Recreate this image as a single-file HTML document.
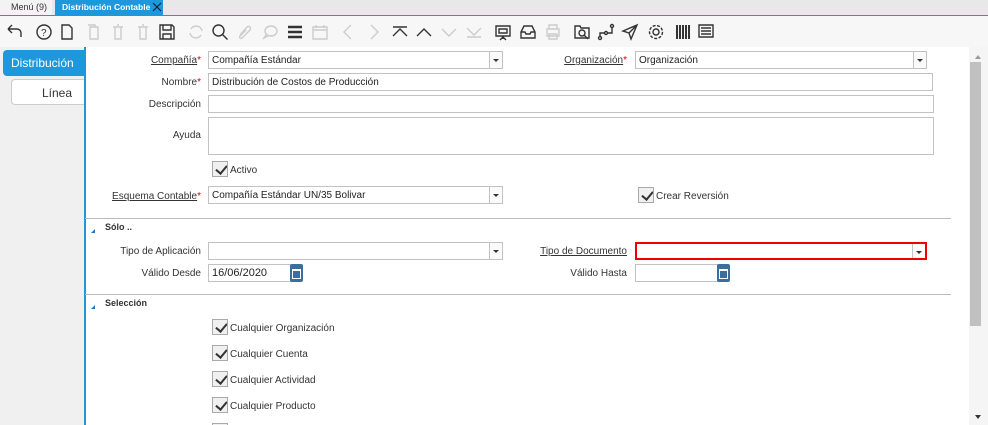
<!DOCTYPE html><html><head><meta charset="utf-8"><style>
*{margin:0;padding:0;box-sizing:border-box}
html,body{width:988px;height:425px;overflow:hidden}
body{background:#fff;font-family:"Liberation Sans",sans-serif;font-size:10px;color:#333;position:relative}
.a{position:absolute}
.lbl{position:absolute;text-align:right;width:180px;font-size:10px;color:#333}
.u{text-decoration:underline}
.req{color:#d00}
.in{position:absolute;border:1px solid #c2c2c2;background:#fff;height:18px;font-size:10px;padding:3px 0 0 3px;color:#222}
.dd{position:absolute;right:0;top:0;width:13px;height:16px;border-left:1px solid #c2c2c2;background:#fafafa}
.dd:after{content:"";position:absolute;left:3px;top:7px;border:3px solid transparent;border-top:3px solid #333}
.cal{position:absolute;width:13px;height:18px;background:#3a6e9e;border-radius:2px}
.cal:after{content:"";position:absolute;left:2px;top:5px;width:7px;height:7px;border:1px solid #fff;border-top-width:2px}
.cb{position:absolute;width:16px;height:16px;border:1px solid #aaa;background:#f0f0f0;overflow:hidden}
.cb:after{content:"";position:absolute;left:5px;top:1px;width:5px;height:9px;border:solid #333;border-width:0 2px 2px 0;transform:rotate(40deg)}
.cbl{position:absolute;font-size:10px;color:#333}
.sep{position:absolute;left:85px;width:866px;height:1px;background:#bbb}
.sec{position:absolute;left:105px;font-weight:bold;font-size:9px;color:#333}
.tri{position:absolute;left:91px;width:0;height:0;border-left:4px solid transparent;border-bottom:4px solid #1e78c8}
svg.i{position:absolute;top:23px;width:18px;height:18px;fill:none;stroke:#333;stroke-width:1.4}
svg.g{stroke:#ccc}
</style></head><body>
<div class="a" style="left:0;top:0;width:988px;height:15px;background:#e8e8e8"></div>
<div class="a" style="left:0;top:0;width:52px;height:15px;background:#f3f3f3;font-size:9px;padding:2px 0 0 11px;color:#333">Menú (9)</div>
<div class="a" style="left:55px;top:0;width:108px;height:15px;background:#1e98dc;font-size:8.5px;padding:2px 0 0 7px;color:#fff;font-weight:bold;white-space:nowrap">Distribución Contable</div>
<svg class="a" style="left:152px;top:2px" width="10" height="10" viewBox="0 0 10 10"><path d="M1 1l8 8M9 1l-8 8" stroke="#123" stroke-width="1.2"/></svg>
<div class="a" style="left:0;top:15px;width:988px;height:1px;background:#1e98dc"></div>
<div class="a" style="left:0;top:16px;width:988px;height:31px;background:#f7f7f7"></div>
<svg class="i" style="left:5px" viewBox="0 0 18 18"><path d="M3 6h9a4 4 0 0 1 4 4v4M3 6l4-4M3 6l4 4"/></svg>
<svg class="i" style="left:35px" viewBox="0 0 18 18"><circle cx="9" cy="9" r="7"/><text x="6" y="13" font-size="10" fill="#333" stroke="none">?</text></svg>
<svg class="i" style="left:58px" viewBox="0 0 18 18"><path d="M4 2h7l3 3v11H4z"/></svg>
<svg class="i g" style="left:84px" viewBox="0 0 18 18"><path d="M6 4h8v12H6zM4 2h7v2"/></svg>
<svg class="i g" style="left:109px" viewBox="0 0 18 18"><path d="M4 4h10M6 4v12h6V4M8 2h2"/></svg>
<svg class="i g" style="left:134px" viewBox="0 0 18 18"><path d="M4 4h10M6 4v12h6V4M8 2h2"/></svg>
<svg class="i" style="left:158px" viewBox="0 0 18 18"><path d="M2 2h12l2 2v12H2zM5 2v5h8V2M5 16v-5h8v5"/></svg>
<svg class="i g" style="left:187px" viewBox="0 0 18 18"><path d="M15 8a6 6 0 0 0-11-2M3 10a6 6 0 0 0 11 2"/></svg>
<svg class="i" style="left:211px" viewBox="0 0 18 18"><circle cx="7.5" cy="7.5" r="5.5"/><path d="M11.5 11.5l5 5"/></svg>
<svg class="i g" style="left:236px" viewBox="0 0 18 18"><path d="M4 12l7-8a2 2 0 0 1 3 3l-8 8a1 1 0 0 1-2-2l6-6"/></svg>
<svg class="i g" style="left:261px" viewBox="0 0 18 18"><ellipse cx="10" cy="8" rx="6" ry="5"/><path d="M5 12l-2 3 4-2"/></svg>
<svg class="i" style="left:286px;stroke-width:2.5" viewBox="0 0 18 18"><path d="M2 4h14M2 9h14M2 14h14"/></svg>
<svg class="i g" style="left:311px" viewBox="0 0 18 18"><path d="M2 4h14v12H2zM2 7h14M5 2v3M13 2v3"/></svg>
<svg class="i g" style="left:339px" viewBox="0 0 18 18"><path d="M12 2L5 9l7 7"/></svg>
<svg class="i g" style="left:365px" viewBox="0 0 18 18"><path d="M6 2l7 7-7 7"/></svg>
<svg class="i" style="left:391px" viewBox="0 0 18 18"><path d="M2 4h14M2 13l7-7 7 7"/></svg>
<svg class="i" style="left:415px" viewBox="0 0 18 18"><path d="M2 13l7-7 7 7"/></svg>
<svg class="i g" style="left:440px" viewBox="0 0 18 18"><path d="M2 6l7 7 7-7"/></svg>
<svg class="i g" style="left:465px" viewBox="0 0 18 18"><path d="M2 14h14M2 5l7 7 7-7"/></svg>
<svg class="i" style="left:494px" viewBox="0 0 18 18"><path d="M2 3h14v10H2zM9 13v3M6 17l3-3 3 3M5 6h8v4H5z"/></svg>
<svg class="i" style="left:519px" viewBox="0 0 18 18"><path d="M2 9l3-6h8l3 6v6H2zM2 9h4l1 2h4l1-2h4"/></svg>
<svg class="i g" style="left:544px" viewBox="0 0 18 18"><path d="M5 6V2h8v4M3 6h12v7H3zM5 11h8v5H5z"/></svg>
<svg class="i" style="left:573px" viewBox="0 0 18 18"><path d="M2 3h5l1 2h8v10H2z"/><circle cx="9" cy="10" r="3"/><path d="M11 12l4 4"/></svg>
<svg class="i" style="left:597px" viewBox="0 0 18 18"><circle cx="3" cy="15" r="1.5"/><circle cx="9" cy="10" r="1.5"/><circle cx="15" cy="3" r="1.5"/><path d="M3 13V10h5M10 10h5V5"/></svg>
<svg class="i" style="left:621px" viewBox="0 0 18 18"><path d="M16 2L2 8l6 2 2 6zM16 2L8 10"/></svg>
<svg class="i" style="left:647px" viewBox="0 0 18 18"><circle cx="9" cy="9" r="3"/><circle cx="9" cy="9" r="6.5" stroke-dasharray="3 1.5"/></svg>
<svg class="i" style="left:674px;stroke-width:2" viewBox="0 0 18 18"><path d="M3 2v14M6 2v14M9 2v14M12 2v14M15 2v14"/></svg>
<svg class="i" style="left:697px" viewBox="0 0 18 18"><path d="M2 2h14v12H2zM4 5h10M4 8h10M4 11h10"/></svg>
<div class="a" style="left:0;top:47px;width:84px;height:378px;background:#f0f0f0"></div>
<div class="a" style="left:84px;top:47px;width:2px;height:378px;background:#1e98dc"></div>
<div class="a" style="left:3px;top:50px;width:81px;height:26px;background:#1e98dc;border-radius:4px 0 0 4px;color:#fff;font-size:12px;padding:6px 0 0 8px">Distribución</div>
<div class="a" style="left:11px;top:79px;width:73px;height:26px;background:#fff;border:1px solid #ccc;border-right:none;border-radius:4px 0 0 4px;font-size:12px;padding:6px 0 0 30px">Línea</div>
<div class="a" style="left:86px;top:47px;width:902px;height:378px;background:#fff"></div>
<div class="a" style="left:969px;top:47px;width:19px;height:378px;background:#f5f5f5"></div>
<div class="a" style="left:975px;top:52px;border:3px solid transparent;border-bottom:4px solid #999"></div>
<div class="a" style="left:970px;top:62px;width:11px;height:264px;background:#c0c0c0"></div>
<div class="a" style="left:975px;top:415px;border:3px solid transparent;border-top:4px solid #333"></div>
<div class="lbl" style="left:21px;top:55px"><span class="u">Compañía</span><span class="req">*</span></div>
<div class="in" style="left:208px;top:51px;width:295px">Compañía Estándar<div class="dd"></div></div>
<div class="lbl" style="left:447px;top:55px"><span class="u">Organización</span><span class="req">*</span></div>
<div class="in" style="left:635px;top:51px;width:292px">Organización<div class="dd"></div></div>
<div class="lbl" style="left:21px;top:77px">Nombre<span class="req">*</span></div>
<div class="in" style="left:208px;top:73px;width:725px">Distribución de Costos de Producción</div>
<div class="lbl" style="left:21px;top:99px">Descripción</div>
<div class="in" style="left:208px;top:95px;width:726px"></div>
<div class="lbl" style="left:21px;top:130px">Ayuda</div>
<div class="in" style="left:208px;top:117px;width:726px;height:38px"></div>
<div class="cb" style="left:212px;top:161px"></div><div class="cbl" style="left:230px;top:165px">Activo</div>
<div class="lbl" style="left:21px;top:191px"><span class="u">Esquema Contable</span><span class="req">*</span></div>
<div class="in" style="left:208px;top:186px;width:295px">Compañía Estándar UN/35 Bolivar<div class="dd"></div></div>
<div class="cb" style="left:638px;top:187px"></div><div class="cbl" style="left:656px;top:191px">Crear Reversión</div>
<div class="sep" style="top:218px"></div>
<div class="tri" style="top:229px"></div><div class="sec" style="top:222px">Sólo ..</div>
<div class="lbl" style="left:21px;top:246px">Tipo de Aplicación</div>
<div class="in" style="left:208px;top:242px;width:295px"><div class="dd"></div></div>
<div class="lbl" style="left:447px;top:246px"><span class="u">Tipo de Documento</span></div>
<div class="in" style="left:635px;top:242px;width:292px;border:2px solid #e00"><div class="dd" style="height:14px"></div></div>
<div class="lbl" style="left:21px;top:268px">Válido Desde</div>
<div class="in" style="left:208px;top:264px;width:83px;font-size:11px;padding-top:2px">16/06/2020</div><div class="cal" style="left:290px;top:264px"></div>
<div class="lbl" style="left:447px;top:268px">Válido Hasta</div>
<div class="in" style="left:635px;top:264px;width:83px"></div><div class="cal" style="left:717px;top:264px"></div>
<div class="sep" style="top:294px"></div>
<div class="tri" style="top:305px"></div><div class="sec" style="top:298px">Selección</div>
<div class="cb" style="left:212px;top:319px"></div><div class="cbl" style="left:230px;top:323px">Cualquier Organización</div>
<div class="cb" style="left:212px;top:345px"></div><div class="cbl" style="left:230px;top:349px">Cualquier Cuenta</div>
<div class="cb" style="left:212px;top:371px"></div><div class="cbl" style="left:230px;top:375px">Cualquier Actividad</div>
<div class="cb" style="left:212px;top:397px"></div><div class="cbl" style="left:230px;top:401px">Cualquier Producto</div>
<div class="cb" style="left:212px;top:423px"></div>
</body></html>
